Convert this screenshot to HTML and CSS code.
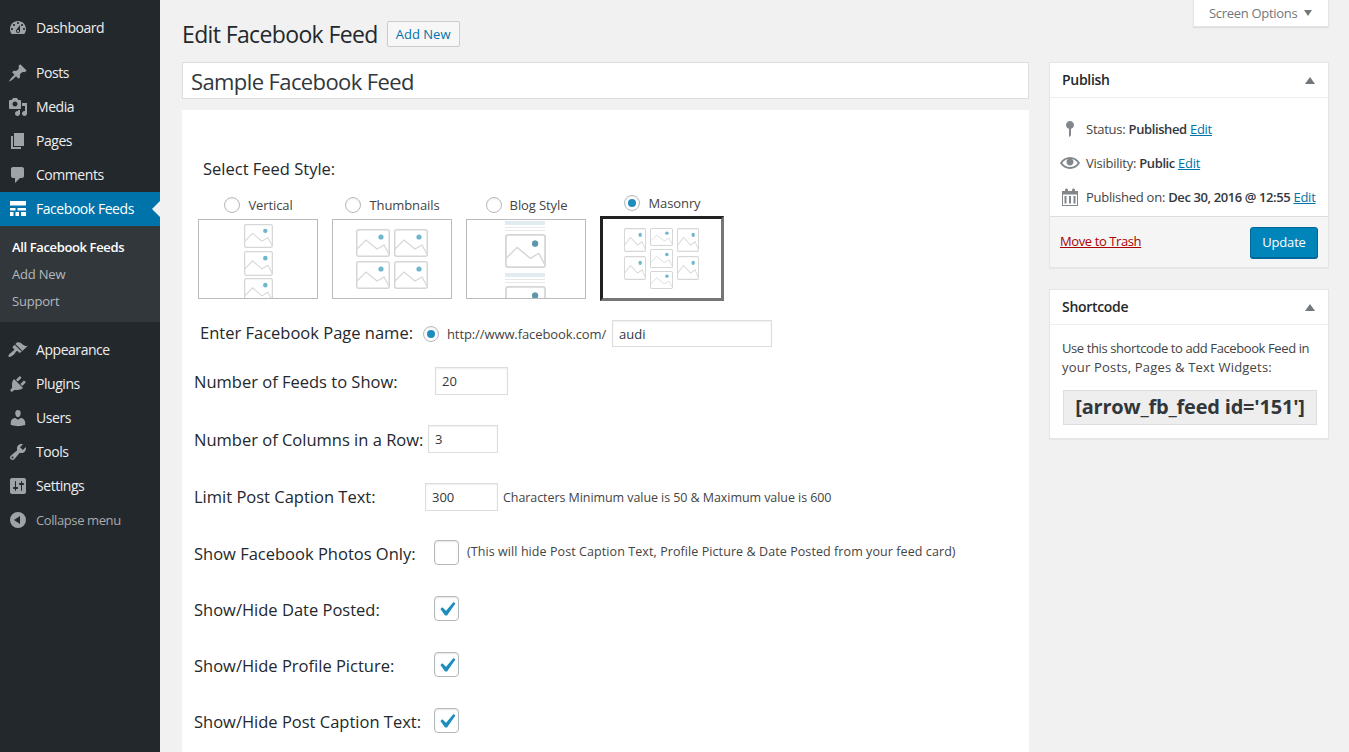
FILE: index.html
```html
<!DOCTYPE html>
<html lang="en">
  <head>
    <meta charset="utf-8">
    <title>Edit Facebook Feed</title>
    <link rel="stylesheet" href="styles.css">
  </head>
  <body>
    <svg class="defs" width="0" height="0">
      <symbol id="pic" viewBox="0 0 34 28" preserveAspectRatio="none">
        <rect x="0.75" y="0.75" width="32.5" height="26.5" rx="2" fill="#fff" stroke="#d6d6d6" stroke-width="1.5"/>
        <path d="M1 20l9-9 11 9 7-4 5 9" fill="none" stroke="#d6d6d6" stroke-width="1.2"/>
        <circle cx="25" cy="8" r="2.600" fill="#6fb6cf"/>
      </symbol>
    </svg>
    <div class="shell">
      <nav class="sidebar">
        <ul class="menu">
          <li class="item"><svg class="ico" viewBox="0 0 20 20"><path d="M3.760 16h12.480c1.100-1.370 1.760-3.110 1.760-5 0-4.420-3.580-8-8-8s-8 3.580-8 8c0 1.890.66 3.630 1.760 5zM10 4c.55 0 1 .45 1 1s-.45 1-1 1-1-.45-1-1 .45-1 1-1zM6 6c.55 0 1 .45 1 1s-.45 1-1 1-1-.45-1-1 .45-1 1-1zm8 0c.55 0 1 .45 1 1s-.45 1-1 1-1-.45-1-1 .45-1 1-1zm-5.370 5.550L12 7v6c0 1.100-.9 2-2 2s-2-.9-2-2c0-.57.24-1.080.63-1.450zM4 10c.55 0 1 .45 1 1s-.45 1-1 1-1-.45-1-1 .45-1 1-1zm12 0c.55 0 1 .45 1 1s-.45 1-1 1-1-.45-1-1 .45-1 1-1zm-5 3c0-.55-.45-1-1-1s-1 .45-1 1 .45 1 1 1 1-.45 1-1z"/></svg>Dashboard</li>
          <li class="item sep"><svg class="ico" viewBox="0 0 20 20"><path d="M10.440 3.020l1.820-1.820 6.360 6.350-1.830 1.820c-1.050-.68-2.480-.57-3.410.36l-.75.75c-.92.93-1.040 2.350-.35 3.410l-1.830 1.820-2.410-2.410-2.800 2.790c-.42.42-3.380 2.710-3.800 2.290s1.860-3.390 2.280-3.810l2.790-2.790L4.100 9.360l1.830-1.820c1.050.69 2.480.57 3.400-.36l.75-.75c.93-.92 1.050-2.350.36-3.410z"/></svg>Posts</li>
          <li class="item"><svg class="ico" viewBox="0 0 20 20"><path d="M13 11V4c0-.55-.45-1-1-1h-1.670L9 1H5L3.670 3H2c-.55 0-1 .45-1 1v7c0 .55.45 1 1 1h10c.55 0 1-.45 1-1zM7 4.500c1.380 0 2.500 1.120 2.500 2.500S8.380 9.500 7 9.500 4.500 8.380 4.500 7 5.620 4.500 7 4.500zM14 6h5v10.500c0 1.380-1.120 2.500-2.500 2.500S14 17.880 14 16.500s1.120-2.500 2.500-2.500c.17 0 .34.02.5.05V9h-3V6zm-4 8.050V13h2v3.500c0 1.380-1.120 2.500-2.500 2.500S7 17.880 7 16.500 8.120 14 9.500 14c.17 0 .34.02.5.05z"/></svg>Media</li>
          <li class="item"><svg class="ico" viewBox="0 0 20 20"><path d="M6 15V2h10v13H6zm-1 1h8v2H3V5h2v11z"/></svg>Pages</li>
          <li class="item"><svg class="ico" viewBox="0 0 20 20"><path d="M5 2h9c1.100 0 2 .9 2 2v7c0 1.100-.9 2-2 2h-2l-5 5v-5H5c-1.100 0-2-.9-2-2V4c0-1.100.9-2 2-2z"/></svg>Comments</li>
          <li class="item current"><svg class="ico" viewBox="0 0 20 20"><path d="M2 2h16v4.500H2zM2 9h5.500v2.500H2zM9.500 9H18v2.500H9.500zM2 13h3.500v4H2zM7.500 13H11v4H7.500zM13 13h5v4h-5z"/></svg>Facebook Feeds</li>
          <li class="submenu">
            <ul>
              <li class="subitem active">All Facebook Feeds</li>
              <li class="subitem">Add New</li>
              <li class="subitem">Support</li>
            </ul>
          </li>
          <li class="item sep"><svg class="ico" viewBox="0 0 20 20"><path d="M14.480 11.060L7.410 3.990l1.500-1.500c.5-.56 2.300-.47 3.510.32 1.210.8 1.430 1.280 2.910 2.100 1.180.64 2.450 1.260 4.450.85zm-.71.71L6.700 4.700 4.930 6.470c-.39.39-.39 1.020 0 1.410l1.060 1.060c.39.39.39 1.030 0 1.420-.6.6-1.430 1.110-2.210 1.690-.35.26-.7.53-1.010.84C1.430 13.230-.1 16.040.7 16.850c.81.8 3.860-.98 5.200-2.310.31-.31.58-.66.84-1.010.58-.78 1.090-1.610 1.690-2.210.39-.39 1.020-.39 1.410 0l1.060 1.060c.39.39 1.020.39 1.410 0z"/></svg>Appearance</li>
          <li class="item"><svg class="ico" viewBox="0 0 20 20"><path d="M13.110 4.360L9.870 7.600 8 5.730l3.240-3.240c.35-.34 1.050-.2 1.560.32.52.51.66 1.210.31 1.550zm-8 1.770l.91-1.120 9.010 9.010-1.190.84c-.71.71-2.630 1.160-3.820 1.160H6.140L4.900 17.260c-.59.59-1.540.59-2.120 0-.59-.58-.59-1.530 0-2.120l1.240-1.240v-3.880c0-1.130.4-3.190 1.090-3.890zm7.260 3.970l3.240-3.240c.34-.35 1.040-.21 1.550.31.52.51.66 1.210.31 1.550l-3.240 3.250z"/></svg>Plugins</li>
          <li class="item"><svg class="ico" viewBox="0 0 20 20"><path d="M10 9.250c-2.270 0-2.730-3.440-2.730-3.440C7 4.020 7.820 2 9.970 2c2.160 0 2.980 2.020 2.710 3.810 0 0-.41 3.440-2.680 3.440zm0 2.570L12.720 10c2.390 0 4.520 2.330 4.520 4.530v2.490s-3.650 1.130-7.240 1.130c-3.650 0-7.240-1.130-7.240-1.130v-2.490c0-2.250 1.940-4.480 4.470-4.480z"/></svg>Users</li>
          <li class="item"><svg class="ico" viewBox="0 0 20 20"><path d="M16.680 9.770c-1.340 1.340-3.300 1.670-4.950.99l-5.410 6.520c-.99.99-2.590.99-3.580 0s-.99-2.590 0-3.570l6.520-5.420c-.68-1.650-.35-3.610.99-4.950 1.280-1.280 3.120-1.620 4.720-1.060l-2.890 2.890 2.820 2.820 2.860-2.870c.53 1.580.18 3.390-1.080 4.650zM3.810 16.210c.4.39 1.040.39 1.430 0 .4-.4.4-1.040 0-1.430-.39-.4-1.030-.4-1.430 0-.39.39-.39 1.030 0 1.430z"/></svg>Tools</li>
          <li class="item"><svg class="ico" viewBox="0 0 20 20"><path fill-rule="evenodd" d="M18 16V4c0-1.100-.9-2-2-2H4c-1.100 0-2 .9-2 2v12c0 1.100.9 2 2 2h12c1.100 0 2-.9 2-2zM8 11h1c.55 0 1 .45 1 1s-.45 1-1 1H8v1.500c0 .28-.22.5-.5.5s-.5-.22-.5-.5V13H6c-.55 0-1-.45-1-1s.45-1 1-1h1V5.500c0-.28.22-.5.5-.5s.5.22.5.5V11zm5-2h-1c-.55 0-1-.45-1-1s.45-1 1-1h1V5.500c0-.28.22-.5.5-.5s.5.22.5.5V7h1c.55 0 1 .45 1 1s-.45 1-1 1h-1v5.500c0 .28-.22.5-.5.5s-.5-.22-.5-.5V9z"/></svg>Settings</li>
          <li class="item collapse"><svg class="ico" viewBox="0 0 20 20"><path fill-rule="evenodd" d="M10 2a8 8 0 1 0 0 16 8 8 0 0 0 0-16zm2 4v8L6 10z"/></svg>Collapse menu</li>
        </ul>
      </nav>

      <main class="main">
        <header class="top">
          <div class="heading">
            <h1>Edit Facebook Feed</h1>
            <a class="add-new">Add New</a>
          </div>
          <div class="screen-tab">Screen Options<span class="caret-down"></span></div>
        </header>

        <div class="columns">
          <div class="content">
            <input class="title-input" type="text" value="Sample Facebook Feed">
            <form class="card">
              <div class="style-title">Select Feed Style:</div>
              <div class="styles">
                <div class="style">
                  <div class="style-name"><span class="radio"></span>Vertical</div>
                  <svg class="thumb" viewBox="0 0 118 78">
                    <use href="#pic" x="45" y="4" width="29" height="24"/>
                    <use href="#pic" x="45" y="31" width="29" height="25"/>
                    <use href="#pic" x="45" y="58" width="29" height="25"/>
                  </svg>
                </div>
                <div class="style">
                  <div class="style-name"><span class="radio"></span>Thumbnails</div>
                  <svg class="thumb" viewBox="0 0 118 78">
                    <use href="#pic" x="23" y="9" width="34" height="28"/>
                    <use href="#pic" x="61" y="9" width="34" height="28"/>
                    <use href="#pic" x="23" y="41" width="34" height="28"/>
                    <use href="#pic" x="61" y="41" width="34" height="28"/>
                  </svg>
                </div>
                <div class="style">
                  <div class="style-name"><span class="radio"></span>Blog Style</div>
                  <svg class="thumb" viewBox="0 0 118 78">
                    <rect x="38" y="1" width="40" height="4" fill="#e0ecef"/>
                    <rect x="38" y="7" width="40" height="1" fill="#e8e8e8"/>
                    <rect x="38" y="10" width="40" height="1" fill="#e8e8e8"/>
                    <use href="#pic" x="38" y="14" width="41" height="34"/>
                    <circle cx="68" cy="23.500" r="3" fill="#5e97a8"/>
                    <rect x="38" y="53" width="40" height="4" fill="#e0ecef"/>
                    <rect x="38" y="59" width="40" height="1" fill="#e8e8e8"/>
                    <rect x="38" y="62" width="40" height="1" fill="#e8e8e8"/>
                    <use href="#pic" x="38" y="66" width="41" height="34"/>
                    <circle cx="68" cy="75.500" r="3" fill="#5e97a8"/>
                  </svg>
                </div>
                <div class="style picked">
                  <div class="style-name"><span class="radio on"></span>Masonry</div>
                  <svg class="thumb" viewBox="0 0 118 79">
                    <use href="#pic" x="21" y="9" width="22" height="24"/>
                    <use href="#pic" x="21" y="37" width="22" height="24"/>
                    <use href="#pic" x="47" y="9" width="23" height="18"/>
                    <use href="#pic" x="47" y="30" width="23" height="19"/>
                    <use href="#pic" x="47" y="52" width="23" height="18"/>
                    <use href="#pic" x="74" y="9" width="22" height="24"/>
                    <use href="#pic" x="74" y="37" width="22" height="24"/>
                  </svg>
                </div>
              </div>

              <div class="row row-page">
                <label class="field-label">Enter Facebook Page name:</label>
                <span class="radio on"></span>
                <span class="url">http://www.facebook.com/</span>
                <input class="text" type="text" value="audi">
              </div>
              <div class="row row-feeds">
                <label class="field-label">Number of Feeds to Show:</label>
                <input class="text" type="text" value="20">
              </div>
              <div class="row row-cols">
                <label class="field-label">Number of Columns in a Row:</label>
                <input class="text" type="text" value="3">
              </div>
              <div class="row row-limit">
                <label class="field-label">Limit Post Caption Text:</label>
                <input class="text" type="text" value="300">
                <span class="note">Characters Minimum value is 50 &amp; Maximum value is 600</span>
              </div>
              <div class="row row-check">
                <label class="field-label">Show Facebook Photos Only:</label>
                <span class="check"></span>
                <span class="note">(This will hide Post Caption Text, Profile Picture &amp; Date Posted from your feed card)</span>
              </div>
              <div class="row row-check">
                <label class="field-label">Show/Hide Date Posted:</label>
                <span class="check"><svg viewBox="0 0 20 20"><path d="M14.830 4.890l1.340.94-5.810 8.380H9.020L5.780 9.670l1.340-1.250 2.570 2.400z"/></svg></span>
              </div>
              <div class="row row-check">
                <label class="field-label">Show/Hide Profile Picture:</label>
                <span class="check"><svg viewBox="0 0 20 20"><path d="M14.830 4.890l1.340.94-5.810 8.380H9.020L5.780 9.670l1.340-1.250 2.570 2.400z"/></svg></span>
              </div>
              <div class="row row-check">
                <label class="field-label">Show/Hide Post Caption Text:</label>
                <span class="check"><svg viewBox="0 0 20 20"><path d="M14.830 4.890l1.340.94-5.810 8.380H9.020L5.780 9.670l1.340-1.250 2.570 2.400z"/></svg></span>
              </div>
            </form>
          </div>

          <aside class="side">
            <section class="box">
              <h2 class="box-title">Publish<span class="caret-up"></span></h2>
              <div class="misc">
                <div class="misc-row"><svg class="misc-ico" viewBox="0 0 20 20"><path d="M14 6c0 1.860-1.280 3.410-3 3.860V16c0 1-2 2-2 2V9.860C7.280 9.410 6 7.860 6 6c0-2.210 1.790-4 4-4s4 1.790 4 4z"/></svg>Status: <b>Published</b> <a>Edit</a></div>
                <div class="misc-row"><svg class="misc-ico" viewBox="0 0 20 20"><path d="M19.700 9.400C17.700 6 14 3.900 10 3.900S2.300 6 .3 9.400L0 10l.3.6c2 3.400 5.700 5.500 9.700 5.500s7.700-2.100 9.700-5.500l.3-.6-.3-.6zM10 14.100c-3.100 0-6-1.600-7.700-4.100C3.600 8 5.700 6.600 8 6.100c-.9.6-1.500 1.700-1.500 2.900 0 1.900 1.600 3.500 3.500 3.500s3.500-1.600 3.500-3.500c0-1.200-.6-2.300-1.500-2.900 2.300.5 4.400 1.900 5.700 3.900-1.700 2.500-4.600 4.100-7.700 4.100z"/></svg>Visibility: <b>Public</b> <a>Edit</a></div>
                <div class="misc-row"><svg class="misc-ico" viewBox="0 0 20 20"><path fill-rule="evenodd" d="M15 4h3v15H2V4h3V3c0-.41.15-.76.44-1.060.29-.29.65-.44 1.060-.44s.77.15 1.060.44c.29.3.44.65.44 1.060v1h4V3c0-.41.15-.76.44-1.060.29-.29.65-.44 1.060-.44s.77.15 1.060.44c.29.3.44.65.44 1.060v1zM3 7.500V18h14V7.500zM4.500 9h2v7.500h-2zM9 9h2v7.500H9zm4.500 0h2v7.500h-2z"/></svg>Published on: <b>Dec 30, 2016 @ 12:55</b> <a>Edit</a></div>
              </div>
              <div class="actions">
                <a class="trash">Move to Trash</a>
                <button class="update" type="button">Update</button>
              </div>
            </section>
            <section class="box">
              <h2 class="box-title">Shortcode<span class="caret-up"></span></h2>
              <div class="short-body">
                <p><span class="line-one">Use this shortcode to add Facebook Feed in</span><br><span class="line-two">your Posts, Pages &amp; Text Widgets:</span></p>
                <code class="short-code">[arrow_fb_feed id='151']</code>
              </div>
            </section>
          </aside>
        </div>
      </main>
    </div>
  </body>
</html>
```

FILE: styles.css
```css
html, body {margin:0;padding:0;height:752px;overflow:hidden}
body {background:#f1f1f1;color:#444;font:13px/1.4 "Open Sans","Noto Sans",sans-serif}
.defs {display:block;height:0}
ul {list-style:none;margin:0;padding:0}
a {color:#0073aa}
.shell {display:flex;height:752px;overflow:hidden}

/* sidebar */
.sidebar {width:160px;flex:none;background:#23282d;color:#eee}
.menu {padding-top:11px}
.item {display:flex;align-items:center;height:34px;font-size:14px;letter-spacing:-.45px}
.item.sep {margin-top:11px}
.ico {width:20px;height:20px;margin:0 8px 0 8px;fill:#9ea3a8;flex:none}
.item.current {background:#0073aa;color:#fff;position:relative}
.item.current .ico {fill:#fff}
.item.current::after {content:"";position:absolute;right:0;top:9px;border:8px solid transparent;border-right-color:#f1f1f1;border-left-width:0}
.item.collapse {font-size:13px;color:#aaa;letter-spacing:-.4px}
.submenu {background:#32373c;padding:8px 0 7px}
.subitem {height:27px;line-height:27px;padding-left:12px;font-size:13px;color:#b4b9be;letter-spacing:-.2px}
.subitem.active {color:#fff;font-weight:600;letter-spacing:-.37px}

/* top bar */
.main {flex:1;padding:0 20px 0 22px;min-width:0}
.top {display:flex;justify-content:space-between;align-items:flex-start;height:62px}
.heading {display:flex;align-items:center;margin-top:21px;height:26px}
h1 {margin:0;font-size:23px;font-weight:400;color:#23282d;letter-spacing:-.63px}
.add-new {margin-left:9px;box-sizing:border-box;width:73px;height:26px;line-height:24px;text-align:center;border:1px solid #ccc;border-radius:2px;background:#f7f7f7;font-size:13px}
.screen-tab {box-sizing:border-box;width:136px;height:27px;line-height:26px;padding-left:15px;background:#fff;border:1px solid #e5e5e5;border-top:0;box-shadow:0 1px 1px rgba(0,0,0,.08);color:#72777c;font-size:13px;letter-spacing:-.3px}
.caret-down {display:inline-block;margin-left:7px;vertical-align:2px;border:4.500px solid transparent;border-top:6px solid #72777c;border-bottom:0}

/* content */
.columns {display:flex;gap:20px;align-items:flex-start}
.content {width:847px;flex:none}
.title-input {display:block;box-sizing:border-box;width:100%;height:37px;padding:0 8px;border:1px solid #ddd;background:#fff;font:22px "Open Sans",sans-serif;color:#32373c;letter-spacing:-.6px;outline:0}
.card {margin-top:11px;background:#fff;height:700px;padding:48px 12px 0;box-sizing:border-box}
.style-title {margin-left:9px;height:22px;line-height:22px;font-size:16.500px;font-weight:500;color:#23282d}
.styles {display:flex;gap:14px;align-items:flex-end;margin:14px 0 0 4px}
.style {width:120px;margin-bottom:2px}
.style-name {display:flex;align-items:center;justify-content:center;gap:8px;height:18px;margin-bottom:5px;padding-left:1px;font-size:13px;color:#444;letter-spacing:-.1px}
.thumb {display:block;box-sizing:border-box;width:120px;height:80px;border:1px solid #bbb;background:#fff;overflow:hidden}
.style.picked {width:124px;margin-bottom:0}
.style.picked .style-name {margin-bottom:4px}
.style.picked .thumb {width:124px;height:85px;border:3px inset #767676}
.radio {box-sizing:border-box;width:16px;height:16px;border:1px solid #b4b9be;border-radius:50%;background:#fff;box-shadow:inset 0 1px 2px rgba(0,0,0,.07);flex:none;display:flex;align-items:center;justify-content:center}
.radio.on::before {content:"";width:8px;height:8px;border-radius:50%;background:#1e8cbe}

.row {display:flex;align-items:center;margin-top:30px;height:28px}
.field-label {flex:none;font-size:16.500px;font-weight:500;color:#23282d}
.text {box-sizing:border-box;height:100%;padding:0 6px;border:1px solid #ddd;box-shadow:inset 0 1px 2px rgba(0,0,0,.07);background:#fff;font:13px "Open Sans",sans-serif;color:#32373c;outline:0}
.note {margin-left:5px;padding-top:1px;font-size:12.500px;color:#444;letter-spacing:-.07px}
.row-page {margin:19px 0 0 6px;height:27px}
.row-page .field-label {width:223px;padding-bottom:2px}
.row-page .url {margin-left:8px;width:165px;flex:none;letter-spacing:-.1px;padding-top:2px}
.row-page .text {width:160px}
.row-feeds {margin-top:20px}
.row-feeds .field-label {width:241px;padding-top:2px}
.row-feeds .text {width:73px}
.row-cols .field-label {width:234px;padding-top:2px}
.row-cols .text {width:70px}
.row-limit .field-label {width:231px}
.row-limit .text {width:73px}
.row-check {height:25px;margin-top:31px}
.row-check .field-label {width:240px;padding-top:3px}
.row-limit + .row-check {margin-top:29px}
.row-check .note {margin-left:8px;padding:0 0 1px;letter-spacing:.08px}
.check {box-sizing:border-box;width:25px;height:25px;border:1px solid #b4b9be;border-radius:4px;background:#fff;box-shadow:inset 0 1px 2px rgba(0,0,0,.1);display:block;flex:none;overflow:hidden}
.check svg {display:block;width:29px;height:29px;margin:-2px 0 0 -3px;fill:#1e8cbe}

/* side boxes */
.side {width:280px;flex:none;display:flex;flex-direction:column;gap:21px}
.box {background:#fff;border:1px solid #e5e5e5;box-shadow:0 1px 1px rgba(0,0,0,.04)}
.box-title {display:flex;justify-content:space-between;align-items:center;margin:0;padding:0 13px 0 12px;height:34px;border-bottom:1px solid #eee;font-size:14px;font-weight:600;color:#23282d;letter-spacing:-.3px}
.caret-up {border:5px solid transparent;border-bottom:7px solid #72777c;border-top:0}
.misc {padding:14px 0 2px}
.misc-row {height:34px;line-height:34px;padding-left:36px;position:relative;letter-spacing:-.25px;white-space:nowrap}
.misc-row b {font-weight:600;color:#32373c;letter-spacing:-.4px}
.misc-row a {text-decoration:underline}
.misc-ico {position:absolute;left:10px;top:7px;width:20px;height:20px;fill:#82878c}
.actions {display:flex;justify-content:space-between;align-items:center;height:50px;padding:0 10px;background:#f5f5f5;border-top:1px solid #ddd}
.trash {color:#a00;text-decoration:underline;letter-spacing:-.4px;margin-bottom:2px}
.update {box-sizing:border-box;width:68px;height:31px;border:1px solid #006799;border-radius:3px;background:#0085ba;box-shadow:0 1px 0 #006799;color:#fff;font:13px "Open Sans",sans-serif;letter-spacing:-.2px}
.short-body {padding:14px 12px 13px}
.short-body p {margin:0 0 13px;line-height:19px;white-space:nowrap}
.line-one {letter-spacing:-.4px}
.line-two {letter-spacing:.2px}
.short-code {display:block;box-sizing:border-box;margin-left:1px;width:254px;height:35px;text-align:center;background:#eee;border:1px solid #ddd;font:700 20px/32px "Open Sans",sans-serif;color:#32373c;letter-spacing:-.2px;white-space:nowrap}
```
